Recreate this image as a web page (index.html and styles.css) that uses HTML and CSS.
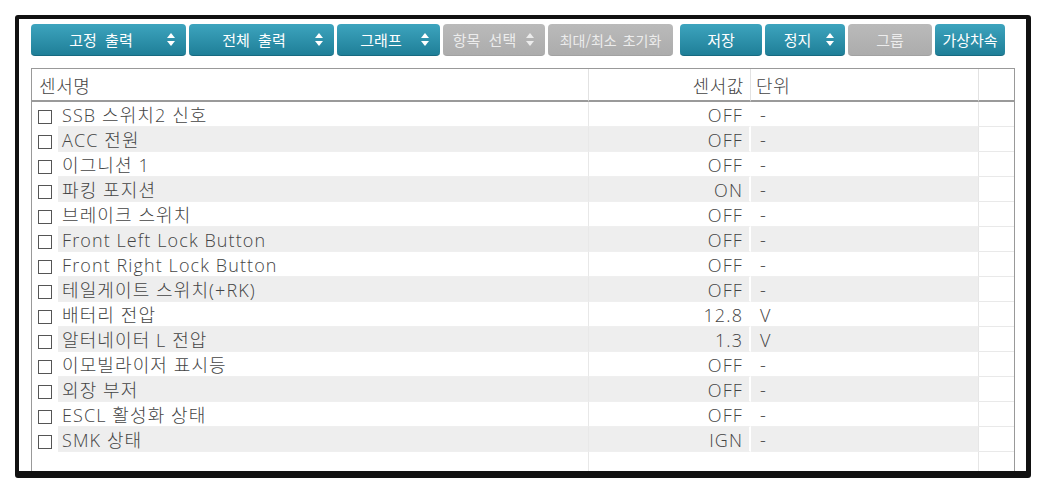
FILE: index.html
```html
<!DOCTYPE html>
<html lang="ko">

<head>
    <meta charset="UTF-8">
    <meta name="viewport" content="width=device-width, initial-scale=1.0">
    <title>센서 모니터</title>
    <link rel="stylesheet" href="styles.css">
</head>

<body>
    <div class="frame">
        <div class="toolbar">
            <a class="btn w-fix" href="">
                <span class="label">고정 출력</span>
                <svg class="spin" width="8" height="13" viewBox="0 0 8 13"><polygon points="0,5 4,0 8,5" /><polygon points="0,8 4,13 8,8" /></svg>
            </a>
            <a class="btn w-all" href="">
                <span class="label">전체 출력</span>
                <svg class="spin" width="8" height="13" viewBox="0 0 8 13"><polygon points="0,5 4,0 8,5" /><polygon points="0,8 4,13 8,8" /></svg>
            </a>
            <a class="btn w-graph" href="">
                <span class="label">그래프</span>
                <svg class="spin" width="8" height="13" viewBox="0 0 8 13"><polygon points="0,5 4,0 8,5" /><polygon points="0,8 4,13 8,8" /></svg>
            </a>
            <a class="btn off w-item" href="">
                <span class="label">항목 선택</span>
                <svg class="spin" width="8" height="13" viewBox="0 0 8 13"><polygon points="0,5 4,0 8,5" /><polygon points="0,8 4,13 8,8" /></svg>
            </a>
            <a class="btn off w-reset" href=""><span class="label">최대/최소 초기화</span></a>
            <a class="btn w-save" href=""><span class="label">저장</span></a>
            <a class="btn w-stop" href="">
                <span class="label">정지</span>
                <svg class="spin" width="8" height="13" viewBox="0 0 8 13"><polygon points="0,5 4,0 8,5" /><polygon points="0,8 4,13 8,8" /></svg>
            </a>
            <a class="btn off w-group" href=""><span class="label">그룹</span></a>
            <a class="btn w-speed" href=""><span class="label">가상차속</span></a>
        </div>

        <table class="sensors">
            <colgroup>
                <col class="c-chk">
                <col class="c-name">
                <col class="c-val">
                <col class="c-unit">
                <col class="c-pad">
            </colgroup>
            <thead>
                <tr>
                    <th colspan="2" class="name">센서명</th>
                    <th class="val">센서값</th>
                    <th class="unit">단위</th>
                    <th class="pad"></th>
                </tr>
            </thead>
            <tbody id="rows">
            </tbody>
        </table>
    </div>

    <script>
        var sensors = [
            ["SSB 스위치2 신호", "OFF", "-"],
            ["ACC 전원", "OFF", "-"],
            ["이그니션 1", "OFF", "-"],
            ["파킹 포지션", "ON", "-"],
            ["브레이크 스위치", "OFF", "-"],
            ["Front Left Lock Button", "OFF", "-"],
            ["Front Right Lock Button", "OFF", "-"],
            ["테일게이트 스위치(+RK)", "OFF", "-"],
            ["배터리 전압", "12.8", "V"],
            ["알터네이터 L 전압", "1.3", "V"],
            ["이모빌라이저 표시등", "OFF", "-"],
            ["외장 부저", "OFF", "-"],
            ["ESCL 활성화 상태", "OFF", "-"],
            ["SMK 상태", "IGN", "-"]
        ];
        var _rows = document.getElementById("rows");
        var str = "";
        for (let i = 0; i < sensors.length; i++) {
            str += "<tr class='" + (i % 2 ? "odd" : "") + "'>"
                + "<td class='chk'><span class='box'></span></td>"
                + "<td class='name'>" + sensors[i][0] + "</td>"
                + "<td class='val'>" + sensors[i][1] + "</td>"
                + "<td class='unit'>" + sensors[i][2] + "</td>"
                + "<td class='pad'></td></tr>";
        }
        str += "<tr class='empty'><td class='chk'></td><td class='name'></td><td class='val'></td><td class='unit'></td><td class='pad'></td></tr>";
        _rows.innerHTML = str;
    </script>
</body>

</html>
```

FILE: styles.css
```css
* {
    box-sizing: border-box;
}

body {
    margin: 0px;
    background: #fff;
    font-family: "Open Sans", "Noto Sans CJK KR", sans-serif;
    color: #444;
}

.frame {
    margin: 15px 0px 0px 15px;
    width: 1016px;
    height: 463px;
    border: 4px solid #111;
    border-right-width: 5px;
    border-bottom-width: 7px;
    border-radius: 3px;
    overflow: hidden;
    padding: 5px 11px 0px 12px;
    background: #fff;
}

/* buttons */

.toolbar {
    display: flex;
    flex-direction: row;
    gap: 3px;
    height: 32px;
}

.btn {
    display: flex;
    align-items: center;
    height: 32px;
    padding: 0px 6px;
    border-radius: 4px;
    text-decoration: none;
    color: #fff;
    font-family: "Noto Sans CJK KR", sans-serif;
    font-size: 15px;
    word-spacing: 4px;
    background: linear-gradient(#3da4be, #1f7f98);
    border-bottom: 1px solid #176a80;
}

.btn .label {
    flex: 1;
    text-align: center;
    white-space: nowrap;
}

.btn .spin {
    fill: #fff;
    margin-right: 5px;
    margin-left: 2px;
}

.btn.off {
    background: linear-gradient(#bababa, #acacac);
    border-bottom: 1px solid #a2a2a2;
    color: #ececec;
}

.btn.off .spin {
    fill: #ececec;
}

.w-fix { width: 155px; }
.w-all { width: 145px; }
.w-graph { width: 103px; }
.w-item { width: 102px; padding-left: 2px; }
.w-reset { width: 125px; font-size: 14px; word-spacing: 2px; padding: 0px 3px; }
.w-save { width: 82px; margin-left: 4px; }
.w-stop { width: 80px; }
.w-group { width: 84px; }
.w-speed { width: 70px; padding: 0px 2px; }

/* table */

.sensors {
    margin-top: 12px;
    width: 984px;
    table-layout: fixed;
    border-collapse: separate;
    border-spacing: 0px;
    border: 1px solid #999;
    border-bottom: none;
    font-size: 18px;
    font-weight: 300;
    letter-spacing: 1.1px;
}

.c-chk { width: 26px; }
.c-name { width: 531px; }
.c-val { width: 162px; }
.c-unit { width: 228px; }
.c-pad { width: 35px; }

.sensors th {
    height: 33px;
    font-size: 18px;
    font-weight: 300;
    letter-spacing: 0.6px;
    border-bottom: 2px solid #9a9a9a;
    border-right: 1px solid #e2e2e2;
    padding: 0px;
}

.sensors th.name {
    text-align: left;
    padding-left: 7px;
}

.sensors th.val {
    text-align: right;
    padding-right: 6px;
}

.sensors th.unit {
    text-align: left;
    padding-left: 5px;
}

.sensors th.pad {
    border-right: none;
}

.sensors td {
    height: 25px;
    padding: 2px 0px 0px 0px;
    line-height: 22px;
    white-space: nowrap;
    border-bottom: 1px solid #efefef;
}

.sensors tr.odd td {
    background: #eeeeee;
}

.sensors tr.odd td.chk,
.sensors tr td.pad {
    background: #fff;
}

.sensors td.chk {
    padding-left: 6px;
    border-bottom-color: #fff;
}

.box {
    display: inline-block;
    width: 14px;
    height: 14px;
    border: 1px solid #555;
    vertical-align: -2px;
}

.sensors td.name {
    padding-left: 4px;
    border-right: 1px solid #e8e8e8;
}

.sensors td.val {
    text-align: right;
    padding-right: 6px;
    border-right: 2px solid #fff;
}

.sensors td.unit {
    padding-left: 9px;
    border-right: 1px solid #e6e6e6;
}

.sensors td.pad {
    border-bottom-color: #e9e9e9;
}

.sensors tr.empty td {
    height: 40px;
    background: #fff;
    border-bottom: none;
}
```
